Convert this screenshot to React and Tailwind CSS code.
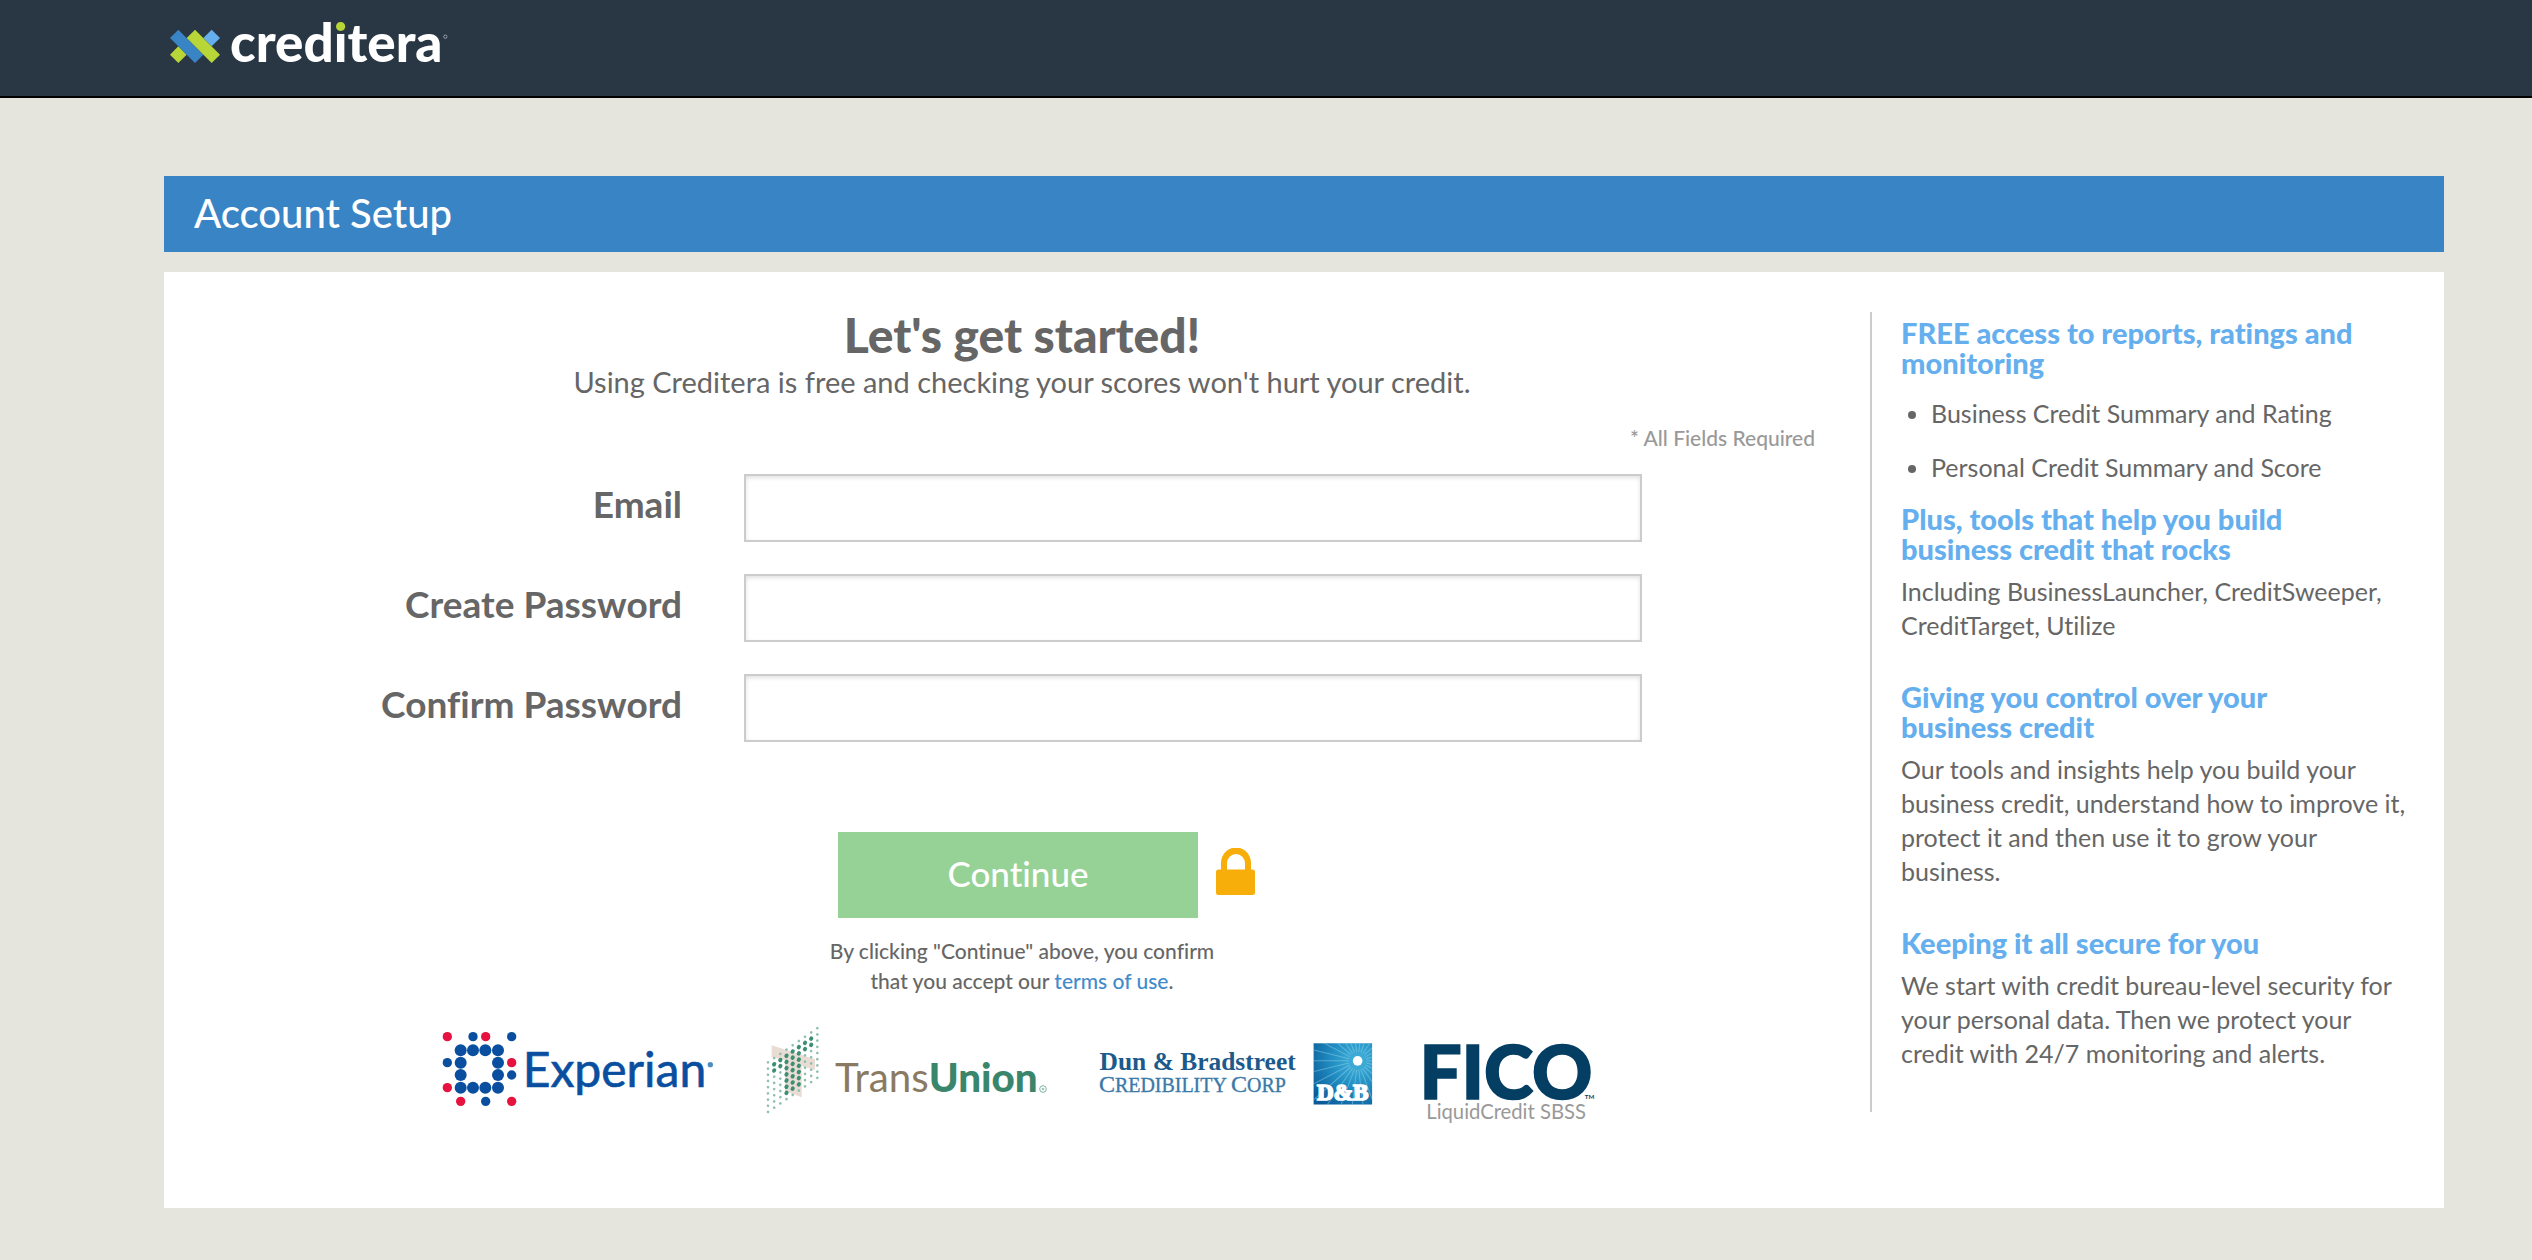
import React from "react";

const FIELDS = [
  { id: "email", label: "Email", type: "email" },
  { id: "create-password", label: "Create Password", type: "password" },
  { id: "confirm-password", label: "Confirm Password", type: "password" },
];

const BLUE = "#0a4f9f";
const RED = "#e6123f";

function CrediteraLogo() {
  return (
    <svg viewBox="90 20 840 204" className="h-[68px] w-[280px]" role="img" aria-label="creditera">
      <defs>
        <linearGradient id="i-dot" gradientUnits="userSpaceOnUse" x1="0" y1="20" x2="0" y2="180">
          <stop offset="0.475" stopColor="#b8d637" />
          <stop offset="0.475" stopColor="#fff" />
        </linearGradient>
      </defs>
      <path d="M115 135 L140 160 L115 185 L90 160Z" fill="#b8d637" />
      <path d="M215 85 L240 110 L215 135 L190 110Z" fill="#65afee" />
      <path d="M115 85 L190 160 L165 185 L90 110Z" fill="#3884c5" />
      <path d="M165 85 L240 160 L215 185 L140 110Z" fill="#b8d637" />
      <text x="270" y="181" fill="#fff" fontFamily="Lato, sans-serif" fontWeight="900" fontSize="159">
        cred<tspan fill="url(#i-dot)">i</tspan>tera
      </text>
      <circle cx="916" cy="106" r="5" fill="none" stroke="#c5cad0" strokeWidth="2" />
    </svg>
  );
}

function ExperianLogo() {
  const ring = [122, 159, 196, 234];
  const rows = [121, 158, 195, 233];
  return (
    <svg viewBox="66 42 816 288" className="h-24 w-[272px]" role="img" aria-label="Experian">
      {rows.map((y, r) =>
        ring.map((x, c) =>
          r === 0 || r === 3 || c === 0 || c === 3 ? (
            <circle key={`${x}-${y}`} cx={x} cy={y} r="18" fill={BLUE} />
          ) : null
        )
      )}
      {[[82, 80], [197, 80], [275, 158], [82, 233], [122, 274], [275, 274]].map(([x, y]) => (
        <circle key={`${x}-${y}`} cx={x} cy={y} r="14" fill={RED} />
      ))}
      {[[159, 80], [275, 80], [82, 158], [275, 195], [197, 274]].map(([x, y]) => (
        <circle key={`${x}-${y}`} cx={x} cy={y} r="14" fill={BLUE} />
      ))}
      <text x="308" y="232" fill={BLUE} stroke={BLUE} strokeWidth="2" fontFamily="Lato, sans-serif" fontSize="144">
        Experian
      </text>
      <circle cx="871" cy="164" r="8" fill="#4a8fc4" />
    </svg>
  );
}

// Number of emphasised dots in each column; they form the slanted "T".
const T_DOTS = [0, 2, 2, 7, 7, 7, 2, 2, 0];

function TransUnionLogo() {
  return (
    <svg viewBox="75 42 852 288" className="h-24 w-[284px]" role="img" aria-label="TransUnion">
      <path d="M98 106 L228 148 L228 180 L188 168 L188 262 L138 243 L138 150 L98 142Z" fill="#e8dcd4" />
      {T_DOTS.map((count, c) =>
        Array.from({ length: 9 }, (_, r) => {
          const strong = r >= 1 && r <= count;
          const x = 87 + 18.5 * c;
          const y = 157 - 12.8 * c + 18.6 * r;
          return (
            <ellipse
              key={`${c}-${r}`}
              cx={x}
              cy={y}
              rx={strong ? 6 : 4}
              ry={strong ? 7 : 4}
              transform={`rotate(35 ${x} ${y})`}
              fill={strong ? "#3d8f73" : "#8fc0ae"}
            />
          );
        })
      )}
      <text x="288" y="247" fontFamily="Lato, sans-serif" fontSize="121">
        <tspan fill="#8b7a62">Trans</tspan>
        <tspan fill="#3a866c" fontWeight="900">Union</tspan>
      </text>
      <circle cx="912" cy="237" r="10" fill="none" stroke="#7fb5a3" strokeWidth="3" />
      <circle cx="912" cy="237" r="4" fill="#9cc7b8" />
    </svg>
  );
}

function DunBradstreetLogo() {
  return (
    <svg viewBox="52 41 798 279" className="h-24 w-[275px]" role="img" aria-label="Dun & Bradstreet Credibility Corp">
      <defs>
        <radialGradient id="dnb-sky" gradientUnits="userSpaceOnUse" cx="806" cy="148" r="160">
          <stop offset="0" stopColor="#45b4dc" />
          <stop offset="0.45" stopColor="#2390c4" />
          <stop offset="1" stopColor="#0b5a97" />
        </radialGradient>
        <clipPath id="dnb-box">
          <rect x="678" y="97" width="170" height="178" />
        </clipPath>
      </defs>
      <text x="56" y="174" fill="#1c5a8c" fontFamily="Liberation Serif, serif" fontWeight="700" fontSize="74">
        Dun &amp; Bradstreet
      </text>
      <text x="54" y="240" fill="#3a7aa8" stroke="#3a7aa8" fontFamily="Liberation Serif, serif" fontSize="70">
        C<tspan fontSize="58">REDIBILITY </tspan>C<tspan fontSize="58">ORP</tspan>
      </text>
      <rect x="678" y="97" width="170" height="178" fill="url(#dnb-sky)" />
      <g clipPath="url(#dnb-box)" stroke="#8fd0ea" strokeWidth="3" opacity="0.5">
        {Array.from({ length: 26 }, (_, i) => {
          const a = (i * Math.PI * 2) / 26;
          return (
            <line
              key={i}
              x1={806 + 26 * Math.cos(a)}
              y1={148 + 26 * Math.sin(a)}
              x2={806 + 170 * Math.cos(a)}
              y2={148 + 170 * Math.sin(a)}
            />
          );
        })}
      </g>
      <circle cx="806" cy="148" r="14" fill="#fff" />
      <text x="688" y="262" fill="#fff" stroke="#fff" strokeWidth="5" fontFamily="Liberation Serif, serif" fontWeight="700" fontSize="67">
        D&amp;B
      </text>
    </svg>
  );
}

function FicoLogo() {
  return (
    <svg viewBox="990 41 522 300" className="-ml-1 h-[103px] w-[180px]" role="img" aria-label="FICO LiquidCredit SBSS">
      <text x="990" y="258" fill="#053e63" stroke="#053e63" strokeWidth="5" fontFamily="Lato, sans-serif" fontWeight="900" fontSize="217">
        FICO
      </text>
      <text x="1472" y="258" fill="#053e63" fontFamily="Lato, sans-serif" fontWeight="700" fontSize="18">
        TM
      </text>
      <text x="1010" y="317" fill="#999" fontFamily="Lato, sans-serif" fontSize="59">
        LiquidCredit SBSS
      </text>
    </svg>
  );
}

function LockIcon() {
  return (
    <svg viewBox="0 0 39 47" className="h-[47px] w-[39px]" aria-hidden="true">
      <path
        fill="#f8ae0a"
        fillRule="evenodd"
        d="M5 21.500V15a14.500 15 0 0 1 30 0v6.500h1.500a2.500 2.500 0 0 1 2.500 2.500v20.500a2.500 2.500 0 0 1-2.500 2.500h-34A2.500 2.500 0 0 1 0 44.500V24a2.500 2.500 0 0 1 2.500-2.500zM11 21.500h18V15.500a9 9.500 0 0 0-18 0z"
      />
    </svg>
  );
}

function SideHeading({ children }) {
  return <h2 className="text-[29px] leading-[30px] font-black text-[#65afee]">{children}</h2>;
}

function SideText({ children }) {
  return <p className="mt-[10px] text-[25px] leading-[34px]">{children}</p>;
}

export default function App() {
  return (
    <div className="min-h-screen bg-[#e5e5dd] font-['Lato',sans-serif] text-[#666] [font-variant-ligatures:none]">
      <header className="border-b-2 border-black bg-[#293643] pt-2 pb-5 pl-[170px]">
        <a href="#home" className="block w-fit">
          <CrediteraLogo />
        </a>
      </header>

      <main className="mr-[88px] ml-[164px] pt-[78px] pb-[52px]">
        <h1 className="bg-[#3884c5] px-[30px] pb-[2px] text-[40px] leading-[74px] font-medium text-white">
          Account Setup
        </h1>

        <div className="mt-5 grid grid-cols-[minmax(0,1fr)_544px] items-start gap-5 bg-white px-[30px] pt-10 pb-[81px]">
          <section>
            <h2 className="text-center text-5xl leading-[46px] font-black">Let's get started!</h2>
            <p className="mt-1 text-center text-[29px] leading-10">
              Using Creditera is free and checking your scores won't hurt your credit.
            </p>
            <p className="mt-[18px] pr-[35px] text-right text-[21px] leading-9 font-medium text-[#999]">
              * All Fields Required
            </p>

            <form onSubmit={(e) => e.preventDefault()}>
              <div className="mt-[18px] flex flex-col gap-8">
                {FIELDS.map((f) => (
                  <div key={f.id} className="grid grid-cols-[550fr_898fr_208fr]">
                    <label htmlFor={f.id} className="pr-[62px] text-right text-[37px] leading-[60px] font-bold">
                      {f.label}
                    </label>
                    <input
                      id={f.id}
                      type={f.type}
                      className="h-[68px] w-full border-2 border-[#ccc] bg-white px-4 text-[28px] shadow-[inset_0_2px_4px_rgba(0,0,0,0.12)] outline-none"
                    />
                  </div>
                ))}
              </div>

              <div className="mt-[90px] grid grid-cols-[1fr_360px_1fr] items-center pr-2">
                <button
                  type="submit"
                  className="col-start-2 h-[86px] bg-[#96d296] pb-1 text-[35px] font-medium text-white"
                >
                  Continue
                </button>
                <span className="pb-2 pl-[18px]">
                  <LockIcon />
                </span>
              </div>
            </form>

            <p className="mt-[18px] text-center text-[21px] leading-[30px] font-medium">
              By clicking "Continue" above, you confirm
              <br />
              that you accept our{" "}
              <a href="#terms" className="text-[#428bca]">
                terms of use
              </a>
              .
            </p>

            <div className="mt-7 flex items-start justify-center gap-[50px] pr-1">
              <ExperianLogo />
              <TransUnionLogo />
              <DunBradstreetLogo />
              <FicoLogo />
            </div>
          </section>

          <aside className="border-l-2 border-[#ccc] pt-[6px] pb-[42px] pl-[29px]">
            <SideHeading>FREE access to reports, ratings and monitoring</SideHeading>
            <ul className="mt-[18px] mb-5 flex list-disc flex-col gap-5 pl-[30px] text-[25px] leading-[34px]">
              <li>Business Credit Summary and Rating</li>
              <li>Personal Credit Summary and Score</li>
            </ul>

            <SideHeading>
              Plus, tools that help you build
              <br />
              business credit that rocks
            </SideHeading>
            <SideText>Including BusinessLauncher, CreditSweeper, CreditTarget, Utilize</SideText>

            <div className="mt-10">
              <SideHeading>
                Giving you control over your
                <br />
                business credit
              </SideHeading>
              <SideText>
                Our tools and insights help you build your business credit, understand how to improve it, protect it
                and then use it to grow your business.
              </SideText>
            </div>

            <div className="mt-10">
              <SideHeading>Keeping it all secure for you</SideHeading>
              <SideText>
                We start with credit bureau-level security for your personal data. Then we protect your credit with
                24/7 monitoring and alerts.
              </SideText>
            </div>
          </aside>
        </div>
      </main>
    </div>
  );
}
